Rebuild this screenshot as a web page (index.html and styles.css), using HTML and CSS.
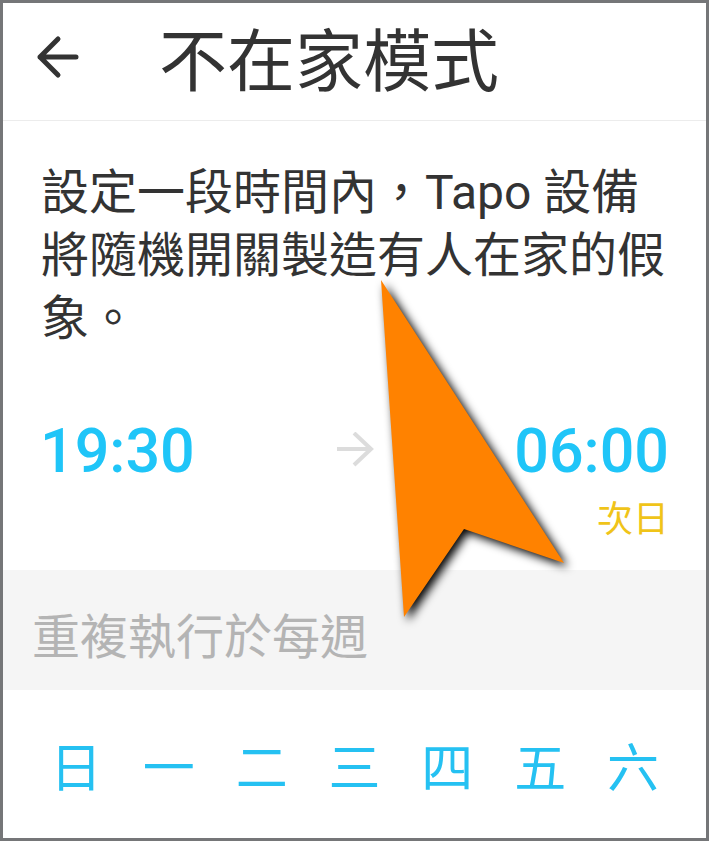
FILE: index.html
```html
<!DOCTYPE html>
<html lang="zh-Hant">
<head>
  <meta charset="UTF-8" />
  <meta name="viewport" content="width=device-width, initial-scale=1.0"/>
  <title>不在家模式</title>
  <link rel="stylesheet" href="styles.css">
</head>
<body>
  <div class="screen">
    <header class="header">
      <button class="back-btn" type="button" aria-label="返回">
        <svg width="44" height="44" viewBox="0 0 44 44">
          <path d="M41 22H5M23 4L5 22L23 40" />
        </svg>
      </button>
      <h1>不在家模式</h1>
    </header>

    <main>
      <p class="description">設定一段時間內，Tapo 設備將隨機開關製造有人在家的假象。</p>

      <!-- 時間區段 -->
      <section class="period">
        <button class="time" type="button">19:30</button>
        <svg class="to-icon" width="38" height="38" viewBox="0 0 38 38">
          <path d="M1 17H35M18 1L35 17L18 33" />
        </svg>
        <button class="time time-end" type="button">06:00</button>
        <span class="next-day">次日</span>
      </section>

      <h2 class="repeat-title">重複執行於每週</h2>

      <div class="days">
        <button class="day" type="button">日</button>
        <button class="day" type="button">一</button>
        <button class="day" type="button">二</button>
        <button class="day" type="button">三</button>
        <button class="day" type="button">四</button>
        <button class="day" type="button">五</button>
        <button class="day" type="button">六</button>
      </div>
    </main>

    <!-- 指標 -->
    <svg class="pointer" width="220" height="360" viewBox="0 0 220 360" aria-hidden="true">
      <polygon points="21,9 204,292 104,258 44,346" />
    </svg>
  </div>
</body>
</html>
```
FILE: styles.css
```css
* {
  box-sizing: border-box;
}
body {
  margin: 0;
  background: #fff;
  color: #333;
  font-family: Roboto, "Noto Sans CJK TC", sans-serif;
}
button {
  padding: 0;
  border: none;
  background: none;
  color: inherit;
  font-family: inherit;
  cursor: pointer;
}
h1, h2, p {
  margin: 0;
}
.screen {
  position: relative;
  min-height: 100vh;
  border: 3px solid #757678;
}
.header {
  display: flex;
  align-items: flex-start;
  height: 118px;
  padding: 20px 32px;
  border-bottom: 1px solid #ececec;
}
.back-btn {
  display: flex;
  margin: 12px 80px 0 0;
}
.back-btn path,
.to-icon path {
  fill: none;
  stroke: #333;
  stroke-width: 5;
  stroke-linecap: round;
  stroke-linejoin: round;
}
h1 {
  font-size: 68px;
  line-height: 80px;
  font-weight: 400;
}
.description {
  padding: 40px 38px;
  font-size: 48px;
  line-height: 63px;
}
.period {
  display: grid;
  grid-template-columns: 1fr auto 1fr;
  align-items: center;
  padding: 25px 37px 26px;
}
.time {
  justify-self: start;
  color: #1fc5f8;
  font-size: 61px;
  line-height: 72px;
  font-weight: 500;
}
.time-end {
  justify-self: end;
}
.to-icon path {
  stroke: #dcdcdc;
  stroke-width: 4;
  stroke-linecap: butt;
  stroke-linejoin: miter;
}
.next-day {
  grid-column: 3;
  justify-self: end;
  margin-top: 9px;
  color: #f0c419;
  font-size: 36px;
  line-height: 48px;
}
.repeat-title {
  padding: 38px 29px 22px;
  background: #f5f5f5;
  color: #b4b4b4;
  font-size: 48px;
  line-height: 60px;
  font-weight: 400;
}
.days {
  display: flex;
  justify-content: space-between;
  padding: 44px 47px 32px;
}
.day {
  color: #25c1f2;
  font-size: 52px;
  line-height: 72px;
}
.pointer {
  position: absolute;
  top: 268px;
  left: 357px;
  fill: #ff8200;
  filter: drop-shadow(4px 4px 5px #000);
  pointer-events: none;
}
```
